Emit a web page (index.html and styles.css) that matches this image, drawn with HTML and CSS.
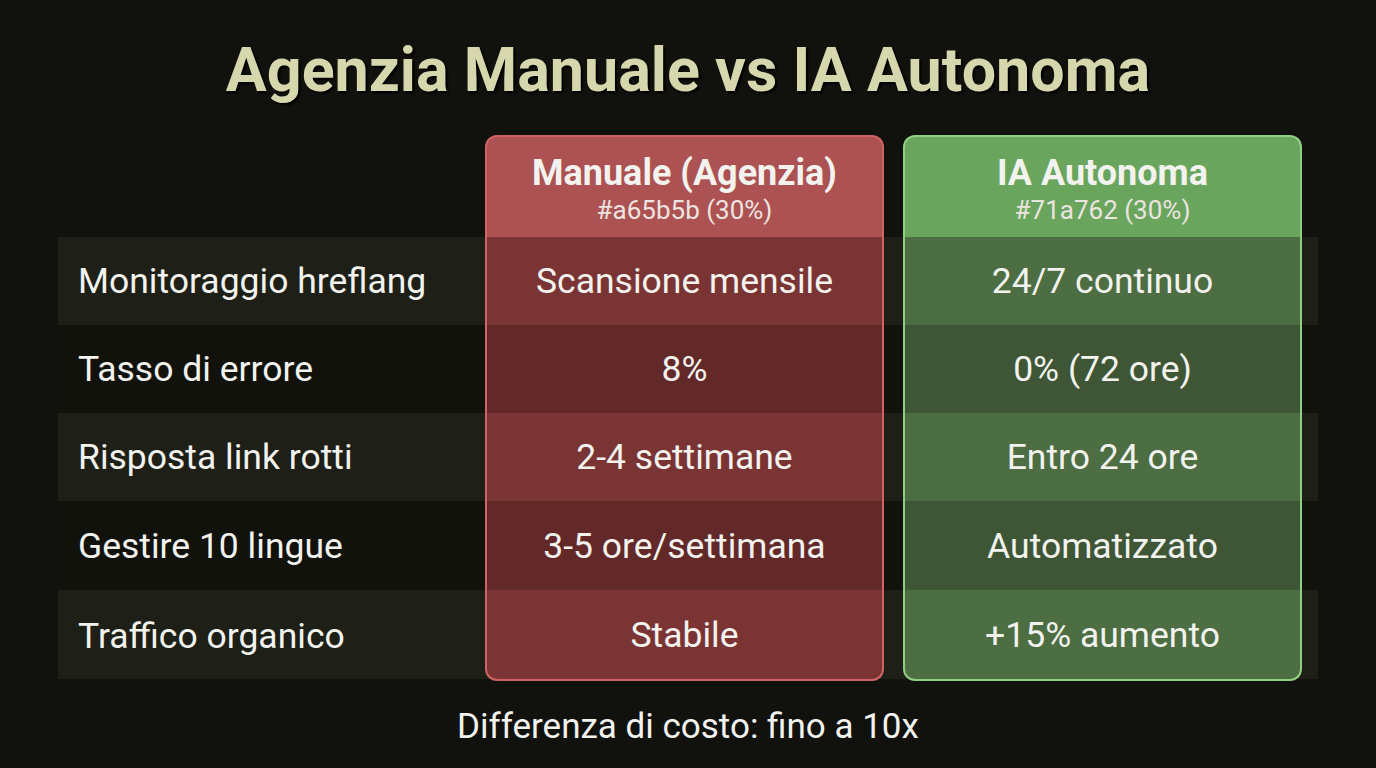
FILE: index.html
```html
<!DOCTYPE html>
<html lang="it">
<head>
<meta charset="utf-8">
<title>Agenzia Manuale vs IA Autonoma</title>
<link rel="stylesheet" href="styles.css">
</head>
<body>
<main class="page">
  <h1 class="title">Agenzia Manuale vs IA Autonoma</h1>
  <div class="table">
    <div class="row head">
      <div class="label"></div>
      <div class="cell red top">
        <div class="h-name">Manuale (Agenzia)</div>
        <div class="h-sub">#a65b5b (30%)</div>
      </div>
      <div class="gap"></div>
      <div class="cell green top">
        <div class="h-name">IA Autonoma</div>
        <div class="h-sub">#71a762 (30%)</div>
      </div>
      <div class="pad"></div>
    </div>
    <div class="row band light">
      <div class="label">Monitoraggio hreflang</div>
      <div class="cell red">Scansione mensile</div>
      <div class="gap"></div>
      <div class="cell green">24/7 continuo</div>
      <div class="pad"></div>
    </div>
    <div class="row band dark">
      <div class="label">Tasso di errore</div>
      <div class="cell red">8%</div>
      <div class="gap"></div>
      <div class="cell green">0% (72 ore)</div>
      <div class="pad"></div>
    </div>
    <div class="row band light">
      <div class="label">Risposta link rotti</div>
      <div class="cell red">2-4 settimane</div>
      <div class="gap"></div>
      <div class="cell green">Entro 24 ore</div>
      <div class="pad"></div>
    </div>
    <div class="row band dark tall">
      <div class="label">Gestire 10 lingue</div>
      <div class="cell red">3-5 ore/settimana</div>
      <div class="gap"></div>
      <div class="cell green">Automatizzato</div>
      <div class="pad"></div>
    </div>
    <div class="row band light tall last">
      <div class="label">Traffico organico</div>
      <div class="cell red bottom">Stabile</div>
      <div class="gap"></div>
      <div class="cell green bottom">+15% aumento</div>
      <div class="pad"></div>
    </div>
  </div>
  <p class="footer">Differenza di costo: fino a 10x</p>
</main>
</body>
</html>
```

FILE: styles.css
```css
* { box-sizing: border-box; }
html, body {
  margin: 0;
  padding: 0;
  background: #11110d;
  width: 1376px;
  height: 768px;
  overflow: hidden;
}
.page {
  font-family: Roboto, "Liberation Sans", sans-serif;
  color: #f2f2ee;
}
.title {
  margin: 0;
  padding-top: 36px;
  height: 135px;
  text-align: center;
  font-size: 61px;
  line-height: 68px;
  font-weight: 700;
  color: #d7d7ad;
  text-shadow: 2px 2px 2px #000;
}
.table {
  width: 1260px;
  margin: 0 auto;
  display: flex;
  flex-direction: column;
}
.row {
  display: grid;
  grid-template-columns: 427px 399px 19px 399px 16px;
  height: 88px;
}
.row.tall { height: 89px; }
.row.head { height: 102px; }
.row.light { background: #1e1f16; }
.row.dark { background: #12120d; }
.label {
  display: flex;
  align-items: center;
  padding-left: 20px;
  font-size: 35.5px;
}
.cell {
  display: flex;
  align-items: center;
  justify-content: center;
  font-size: 35.5px;
  border-left: 2px solid;
  border-right: 2px solid;
}
.cell.red { border-color: #d06464; }
.cell.green { border-color: #8fcf80; }
.light .cell.red { background: #7b3434; }
.dark .cell.red { background: #632929; }
.light .cell.green { background: #4d6d42; }
.dark .cell.green { background: #3f5636; }
.cell.top {
  flex-direction: column;
  border-top: 2px solid;
  border-radius: 12px 12px 0 0;
  padding-top: 4px;
}
.cell.top.red { background: #ad5252; border-color: #d06464; }
.cell.top.green { background: #6aa55e; border-color: #8fcf80; }
.cell.bottom {
  border-bottom: 2px solid;
  border-radius: 0 0 12px 12px;
  height: 91px;
  padding-bottom: 0;
}
.cell.bottom.red { border-color: #d06464; }
.cell.bottom.green { border-color: #8fcf80; }
.h-name {
  font-size: 36px;
  font-weight: 700;
  line-height: 40px;
}
.h-sub {
  font-size: 26px;
  line-height: 30px;
  margin-top: 2px;
  color: #ece4e0;
}
.footer {
  margin: 0;
  padding-top: 28px;
  text-align: center;
  font-size: 35px;
  line-height: 40px;
}
```
